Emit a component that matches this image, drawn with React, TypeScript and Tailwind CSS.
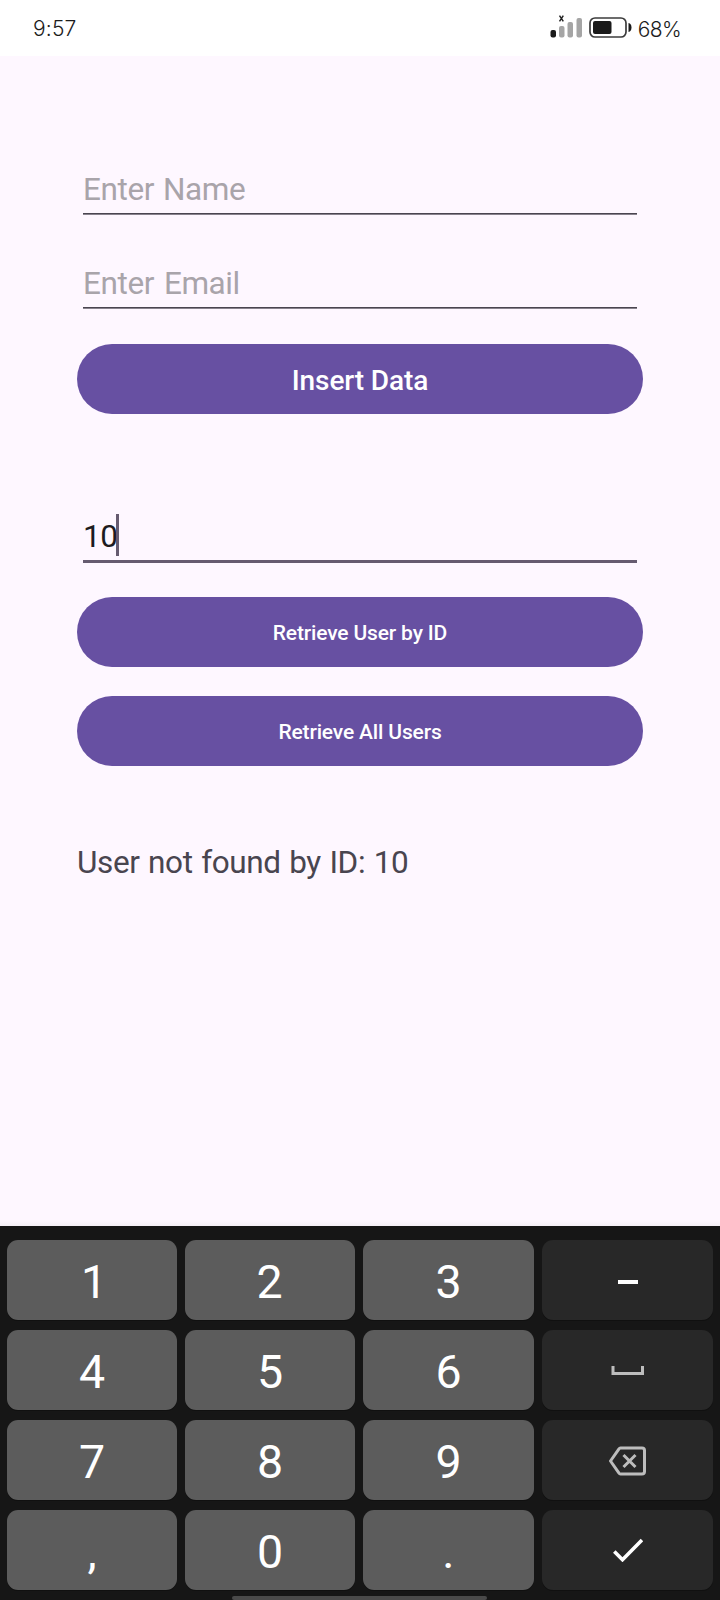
import type { ReactNode } from "react";

const hint = "text-[31.5px] leading-[38px] tracking-[-0.4px] [font-weight:370] whitespace-nowrap";

function Field({ label, className }: { label: string; className: string }) {
  return (
    <div className={`mx-[6px] flex flex-col justify-end ${className}`}>
      <div className={`${hint} text-[#a9a4aa]`}>{label}</div>
      <div className="mt-[4px] h-px bg-[#4a4550]" />
      <div className="h-px bg-[#88828d]" />
    </div>
  );
}

function PillButton({ children, className }: { children: ReactNode; className: string }) {
  return (
    <button className={`flex h-[70px] w-full items-center justify-center rounded-full bg-[#6750a2] font-medium text-white ${className}`}>
      {children}
    </button>
  );
}

function Key({ children, dark = false }: { children: ReactNode; dark?: boolean }) {
  return (
    <button
      className={`flex h-[80px] items-center justify-center rounded-[11px] text-[46.5px] leading-[56px] text-white ${
        dark ? "bg-[#282828] pt-[2px] shadow-[0_1px_0_#101010]" : "bg-[#5c5c5c] pt-[4px] shadow-[0_1px_0_#101010]"
      }`}
    >
      {children}
    </button>
  );
}

function SignalIcon() {
  return (
    <svg width="34" height="26" viewBox="0 0 34 26">
      <path d="M9.500 1.700l3.800 5.600M13.300 1.700L9.500 7.300" stroke="#222" strokeWidth="1.500" />
      <rect x="0.5" y="16" width="5.5" height="7.5" rx="2" fill="#1a1a1a" />
      <rect x="9" y="12" width="5.5" height="11.5" rx="2" fill="#a5a5a5" />
      <rect x="17.5" y="8" width="5.5" height="15.5" rx="2" fill="#a5a5a5" />
      <rect x="26.5" y="4" width="5.5" height="19.5" rx="2" fill="#a5a5a5" />
    </svg>
  );
}

function BatteryIcon() {
  return (
    <svg width="44" height="22" viewBox="0 0 44 22">
      <rect x="1" y="1" width="36" height="19" rx="5" fill="none" stroke="#3c3c3c" strokeWidth="1.7" />
      <rect x="4" y="4" width="18.5" height="13" rx="2" fill="#1a1a1a" />
      <path d="M39.500 6c2 .6 3 2 3 4.500s-1 3.900-3 4.500z" fill="#1a1a1a" />
    </svg>
  );
}

export default function App() {
  return (
    <div className="flex h-[1600px] w-[720px] flex-col overflow-hidden bg-[#fef7ff] font-[Roboto,sans-serif]">
      <header className="flex h-[56px] shrink-0 justify-between bg-white pl-[33px] pr-[39px] font-[Inter,sans-serif] text-[21px] leading-[26px] font-light text-[#1c1c1c]">
        <span className="pt-[16px] tracking-[0.2px]">9:57</span>
        <div className="flex">
          <div className="mt-[14px]"><SignalIcon /></div>
          <div className="mt-[17px] ml-[5px]"><BatteryIcon /></div>
          <span className="mt-[17px] ml-[5px] tracking-[-0.6px]">68%</span>
        </div>
      </header>

      <main className="flex grow flex-col px-[77px]">
        <Field label="Enter Name" className="h-[159px] [word-spacing:1.5px]" />
        <Field label="Enter Email" className="h-[94px] [word-spacing:2.5px]" />
        <PillButton className="mt-[35px] pt-[3px] text-[28px] tracking-[-0.1px]">Insert Data</PillButton>

        <div className="mx-[6px] mt-[100px] flex h-[42px] items-start">
          <span className={`${hint} mt-[4px] w-[33px] text-[#1d1b20]`}>10</span>
          <span className="h-[42px] w-[3px] bg-[#665b70]" />
        </div>
        <div className="mx-[6px] mt-[4px] h-[3px] bg-[#665b70]" />

        <PillButton className="mt-[34px] pt-[4px] text-[21px] tracking-[-0.16px]">Retrieve User by ID</PillButton>
        <PillButton className="mt-[29px] pt-[4px] text-[21px] tracking-[-0.16px]">Retrieve All Users</PillButton>

        <p className={`${hint} mt-[78px] text-[#49454f] [word-spacing:1.2px]`}>User not found by ID: 10</p>
      </main>

      <div className="h-[5px] shrink-0 bg-linear-to-b from-[#fef7ff] to-[#f5eff6]" />
      <section className="flex h-[374px] shrink-0 flex-col bg-[#161616] pt-[14px]">
        <div className="grid grid-cols-[170px_170px_171px_171px] gap-x-[8px] gap-y-[10px] px-[7px]">
          <Key><span className="pl-[4px]">1</span></Key>
          <Key><span className="pr-[1px]">2</span></Key>
          <Key>3</Key>
          <Key dark>
            <svg className="mt-[1px]" width="20" height="4" viewBox="0 0 20 4"><path d="M0 2h20" stroke="#fff" strokeWidth="4" /></svg>
          </Key>
          <Key>4</Key>
          <Key>5</Key>
          <Key>6</Key>
          <Key dark>
            <svg width="34" height="10" viewBox="0 0 34 10"><path d="M2 0v7.500h29.500V0" fill="none" stroke="#bdbdbd" strokeWidth="3" /></svg>
          </Key>
          <Key>7</Key>
          <Key>8</Key>
          <Key>9</Key>
          <Key dark>
            <svg width="38" height="30" viewBox="0 0 38 30" fill="none" stroke="#bdbdbd" strokeWidth="3" strokeLinejoin="round">
              <path d="M11.500 2H33a2.500 2.500 0 0 1 2.500 2.500V25.500a2.500 2.500 0 0 1-2.500 2.500H11.500a2 2 0 0 1-1.500-.8L1.500 15 10 2.800A2 2 0 0 1 11.500 2z" />
              <path d="M14.500 9L26.500 21M26.500 9L14.500 21" />
            </svg>
          </Key>
          <Key>,</Key>
          <Key>0</Key>
          <Key>.</Key>
          <Key dark>
            <svg className="-mt-[2px]" width="30" height="24" viewBox="0 0 30 24"><path d="M1.300 13.500L9.500 21.700 29 2" fill="none" stroke="#fff" strokeWidth="3.600" /></svg>
          </Key>
        </div>
        <div className="mt-[6px] ml-[232px] h-[4px] w-[255px] rounded-[2px] bg-[#4a4a4a]" />
      </section>
    </div>
  );
}
